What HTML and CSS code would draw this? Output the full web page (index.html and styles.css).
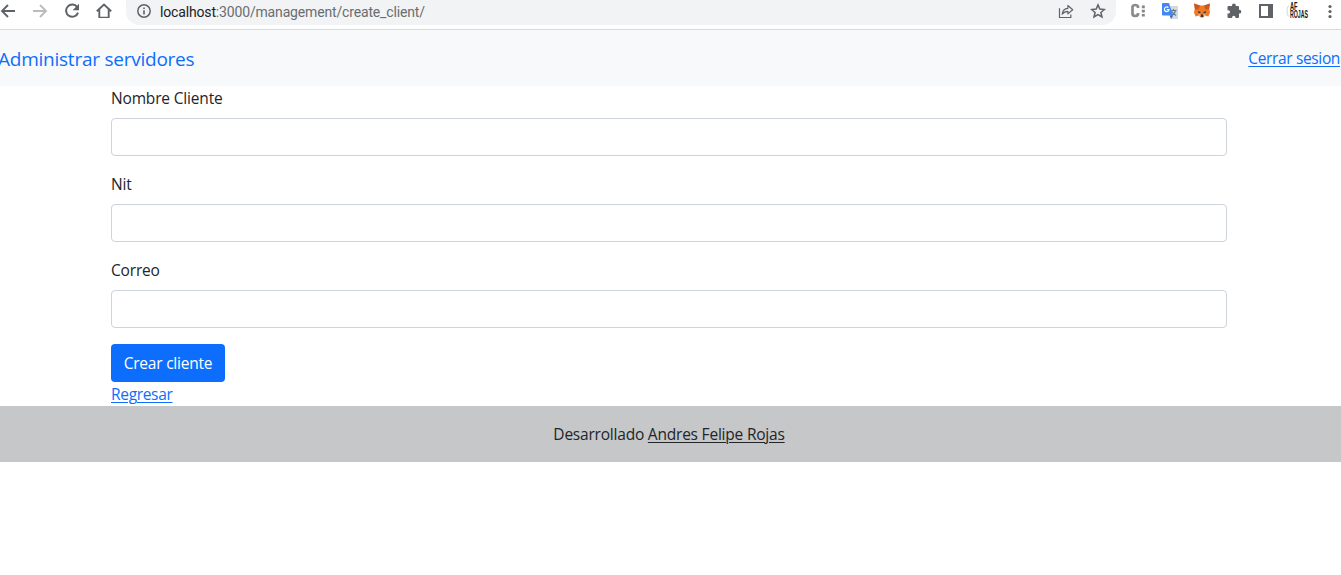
FILE: index.html
```html
<!DOCTYPE html>
<html lang="es">
<head>
<meta charset="utf-8">
<title>Crear cliente</title>
<link rel="stylesheet" href="styles.css">
</head>
<body>
<header class="toolbar">
  <div class="nav-icons">
    <svg width="16" height="18" viewBox="0 0 16 18"><path d="M15 11H2M8 5L2 11l6 6" fill="none" stroke="#5f6368" stroke-width="1.9"/></svg>
    <svg width="16" height="18" viewBox="0 0 16 18"><path d="M1 11h13M8 5l6 6-6 6" fill="none" stroke="#babcbe" stroke-width="1.9"/></svg>
    <svg width="16" height="18" viewBox="0 0 16 18"><path d="M13.2 7.2A6.1 6.1 0 1 0 14 12.6" fill="none" stroke="#5f6368" stroke-width="2"/><path d="M15 3.8v6.4H8.6z" fill="#5f6368"/></svg>
    <svg width="16" height="18" viewBox="0 0 16 18"><path d="M.8 11.2L8 4.6l7.2 6.6M3.3 9.5v8.300h9.4V9.5" fill="none" stroke="#5f6368" stroke-width="1.9"/></svg>
  </div>
  <div class="address">
    <svg class="info" width="16" height="16" viewBox="0 0 16 16"><circle cx="8" cy="8" r="6.2" fill="none" stroke="#5f6368" stroke-width="1.5"/><path d="M8 7.2v4.3M8 4.4v1.7" stroke="#5f6368" stroke-width="1.6"/></svg>
    <span class="url"><span class="host">localhost</span>:3000/management/create_client/</span>
    <svg class="share" width="16" height="16" viewBox="0 0 16 16"><path d="M1.5 5.2v9.3h11.3v-3.1" fill="none" stroke="#5f6368" stroke-width="1.2"/><path d="M4.2 11.2c.4-4 2.5-5.7 5.7-5.9V2.5l4.8 4.3-4.8 4.1V8.3c-2.400 0-4.200.8-5.700 2.900z" fill="none" stroke="#5f6368" stroke-width="1.2" stroke-linejoin="round"/></svg>
    <svg width="16" height="16" viewBox="0 0 16 16"><path d="M8 1.900l1.800 4.200 4.600.4-3.500 3 1.100 4.500L8 11.600 4 14l1.100-4.500-3.500-3 4.600-.4z" fill="none" stroke="#5f6368" stroke-width="1.5"/></svg>
  </div>
  <div class="extensions">
    <svg width="16" height="19" viewBox="0 0 16 19"><path d="M8 8V6.500a3 2.500 0 0 0-5.500 0v8a3 2.500 0 0 0 5.500 0V13" fill="none" stroke="#8c8c8c" stroke-width="2.700"/><path d="M13.300 5.500v11" stroke="#888" stroke-width="3" stroke-dasharray="2.700 1.500"/></svg>
    <svg width="16" height="19" viewBox="0 0 16 19"><path d="M6 6h10v13H9z" fill="#d5d8dc"/><path d="M8.500 10.500h6M11.500 9v1.500M13.500 10.500c-.5 2.500-2 4-4 5M10 11.500c.7 1.700 2 3 4 4" fill="none" stroke="#607d8b" stroke-width="1.200"/><path d="M1 3h6l4 12.500H1A1 1 0 0 1 0 14.500V4A1 1 0 0 1 1 3z" fill="#4285f4"/><path d="M7.500 15.500H11L9.200 19z" fill="#3367d6"/><path d="M6.400 7.700A2.300 2.300 0 1 0 7 9.600H4.800" fill="none" stroke="#fff" stroke-width="1.200"/></svg>
    <svg class="fox" width="18" height="19" viewBox="0 0 18 18"><path d="M1 3l6 2h4l6-2-.8 5 .8 4-1.600 4-3.400-1-1.500 2h-3L6 15l-3.400 1L1 12l.8-4z" fill="#ef7925"/><path d="M1 3l6 2-1.500 4L2 9zM17 3l-6 2 1.500 4L16 9z" fill="#c85924"/><path d="M5 10.500l2.500 1-.2.900H5.500zM13 10.500l-2.500 1 .2.900h1.800zM7.500 15l.7-1h1.600l.7 1v1.500h-3z" fill="#30343a"/><path d="M6 13.500l1.500 1v2L5.500 15zM12 13.500l-1.500 1v2l2-1.500z" fill="#d9c1b2"/></svg>
    <svg width="16" height="19" viewBox="0 0 16 19"><path transform="translate(0 1)" d="M6 5V4.500a1.900 1.900 0 0 1 3.800 0V5H12q1 0 1 1v2.800h.4a1.900 1.900 0 0 1 0 3.800H13v3.400q0 1-1 1H9.500v-.6a1.700 1.700 0 0 0-3.400 0v.6H2.500q-1 0-1-1v-3.400h.8a1.700 1.700 0 0 0 0-3.400h-.8V6q0-1 1-1z" fill="#5f6368"/></svg>
    <svg width="16" height="19" viewBox="0 0 16 19"><path d="M1 4h14v14H1zM3 6v10h7V6z" fill="#5f6368" fill-rule="evenodd"/></svg>
    <svg class="avatar" width="24" height="20" viewBox="0 0 24 20"><path d="M2.500 5.500a11 11 0 0 0 0 11" fill="none" stroke="#b5e2e1"/><text x="4" y="9.500" textLength="7.500" lengthAdjust="spacingAndGlyphs">AF</text><text x="4" y="18" textLength="18" lengthAdjust="spacingAndGlyphs">ROJAS</text></svg>
    <svg class="more" width="4" height="18" viewBox="0 0 4 18"><g fill="#5f6368"><circle cx="2" cy="6.500" r="1.600"/><circle cx="2" cy="11.500" r="1.600"/><circle cx="2" cy="16.500" r="1.600"/></g></svg>
  </div>
</header>
<nav class="navbar">
  <a class="brand" href="#">Administrar servidores</a>
  <a class="link logout" href="#">Cerrar sesion</a>
</nav>
<main class="container">
  <form>
    <div class="field"><label for="name">Nombre Cliente</label><input id="name" type="text"></div>
    <div class="field"><label for="nit">Nit</label><input id="nit" type="text"></div>
    <div class="field"><label for="email">Correo</label><input id="email" type="text"></div>
    <button class="submit" type="button">Crear cliente</button>
  </form>
  <a class="link back" href="#">Regresar</a>
</main>
<footer class="footer"><span class="made">Desarrollado <a class="author" href="#">Andres Felipe Rojas</a></span></footer>
</body>
</html>
```
FILE: styles.css
```css
* { box-sizing: border-box; }
body {
  margin: 0;
  overflow: hidden;
  background: #fff;
  color: #212529;
  font: 15.5px/24px "Open Sans", "Noto Sans", sans-serif;
  letter-spacing: -0.21px;
}
svg { display: block; flex: none; }
.toolbar {
  display: flex;
  height: 30px;
  border-bottom: 1px solid #d9dadb;
}
.nav-icons { display: flex; gap: 16px; width: 126px; }
.address {
  display: flex;
  align-items: center;
  width: 990px;
  height: 25px;
  padding: 0 10px;
  border-radius: 0 0 14px 14px / 0 0 13px 13px;
  background: #f1f3f4;
}
.address svg { margin-bottom: 3px; }
.url {
  margin: 0 auto 2px 8px;
  color: #6a6d70;
  font: 14px/20px Roboto, sans-serif;
  letter-spacing: -0.16px;
}
.host { color: #202124; }
.share { margin-right: 16px; }
.extensions { display: flex; gap: 16px; padding-left: 14px; }
.extensions .fox { margin: 0 -1px; }
.extensions .avatar { margin-left: -4px; overflow: visible; }
.extensions .more { margin-left: 2px; }
.avatar text { fill: #171717; font: bold 10px "Liberation Sans", sans-serif; letter-spacing: 0; }
.navbar {
  display: flex;
  align-items: center;
  justify-content: space-between;
  height: 56px;
  padding-right: 1px;
  background: #f8f9fa;
}
.brand {
  margin: 2px 0 0 -2px;
  color: #0d6efd;
  font-size: 19px;
  letter-spacing: -0.24px;
  text-decoration: none;
}
.link { color: #0d6efd; text-underline-offset: 2px; text-decoration-thickness: 1px; }
.logout { letter-spacing: -0.36px; }
.container { width: 1116px; margin-left: 111px; }
.field { margin-bottom: 16px; }
.field label { display: block; margin-bottom: 8px; letter-spacing: -0.17px; }
.field input {
  display: block;
  width: 100%;
  height: 38px;
  border: 1px solid #ced4da;
  border-radius: 4px;
  background: #fff;
}
.submit {
  display: block;
  width: 114px;
  height: 38px;
  padding: 0;
  border: 0;
  border-radius: 4px;
  background: #0d6efd;
  color: #fff;
  font: inherit;
  letter-spacing: inherit;
}
.back { display: block; width: fit-content; letter-spacing: -0.32px; }
.footer {
  display: flex;
  align-items: center;
  justify-content: center;
  height: 56px;
  padding-right: 3px;
  background: #c6c7c8;
}
.author { color: inherit; text-underline-offset: 2px; text-decoration-thickness: 1px; }
```
